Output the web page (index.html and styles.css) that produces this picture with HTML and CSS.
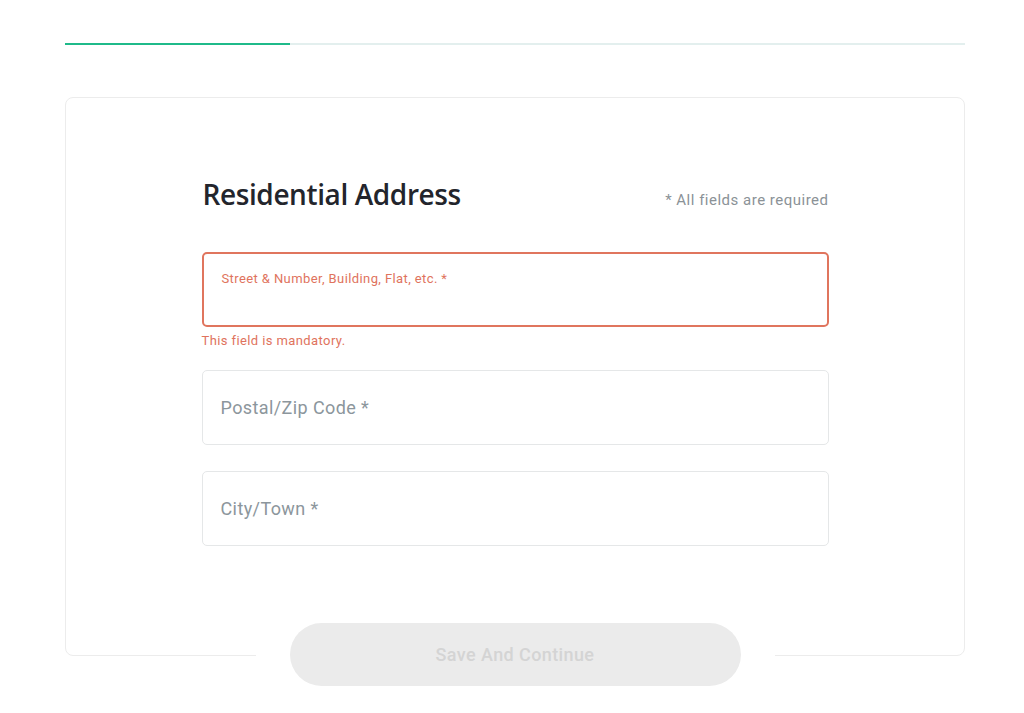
FILE: index.html
```html
<!DOCTYPE html>
<html>
<head>
<meta charset="utf-8">
<link rel="stylesheet" href="styles.css">
</head>
<body>
<div class="page">
  <div class="progress"><div class="progress-fill"></div></div>
  <div class="card">
    <div class="form">
      <div class="head">
        <h1 class="title">Residential Address</h1>
        <span class="note">* All fields are required</span>
      </div>
      <div class="field field-error">
        <span class="float-label">Street &amp; Number, Building, Flat, etc. *</span>
      </div>
      <div class="error-text">This field is mandatory.</div>
      <div class="field field-plain"><span class="placeholder">Postal/Zip Code *</span></div>
      <div class="field field-plain field-last"><span class="placeholder">City/Town *</span></div>
    </div>
  </div>
  <div class="btn-wrap">
    <button class="btn">Save And Continue</button>
  </div>
</div>
</body>
</html>
```
FILE: styles.css
```css
html, body {
  margin: 0;
  padding: 0;
  background: #ffffff;
}
body {
  font-family: Roboto, "Liberation Sans", sans-serif;
}
.page {
  width: 900px;
  margin-left: 65px;
  padding-top: 43px;
  display: flex;
  flex-direction: column;
}
.progress {
  height: 2px;
  background: #e3efee;
  display: flex;
}
.progress-fill {
  width: 225px;
  background: #1fba8a;
}
.card {
  margin-top: 52px;
  height: 557px;
  border: 1px solid #ececec;
  border-radius: 8px;
  display: flex;
  justify-content: center;
}
.form {
  width: 627px;
  padding-top: 77px;
  display: flex;
  flex-direction: column;
}
.head {
  display: flex;
  justify-content: space-between;
  align-items: baseline;
  padding-left: 1px;
  height: 40px;
}
.title {
  margin: 0;
  font-family: "Open Sans", "Liberation Sans", sans-serif;
  font-weight: 600;
  font-size: 28px;
  letter-spacing: -0.4px;
  color: #23252c;
  line-height: 38px;
}
.note {
  font-size: 15px;
  letter-spacing: 0.5px;
  color: #8b9297;
  line-height: 20px;
}
.field {
  box-sizing: border-box;
  height: 75px;
  border-radius: 5px;
  display: flex;
  align-items: center;
  padding-left: 18px;
}
.field-error {
  margin-top: 37px;
  border: 2px solid #e0755e;
  align-items: flex-start;
  padding-top: 17px;
}
.float-label {
  font-size: 13px;
  letter-spacing: 0.4px;
  color: #e0735d;
  line-height: 16px;
}
.error-text {
  margin-top: 6px;
  font-size: 13px;
  letter-spacing: 0.4px;
  color: #e0735d;
  line-height: 16px;
}
.field-plain {
  border: 1px solid #e5e7e8;
  margin-top: 21px;
}
.field-plain + .field-plain {
  margin-top: 26px;
}
.placeholder {
  font-size: 18px;
  letter-spacing: 0.4px;
  color: #8c969c;
}
.btn-wrap {
  align-self: center;
  margin-top: -33px;
  background: #ffffff;
  padding: 0 34px;
  display: flex;
}
.btn {
  width: 451px;
  height: 63px;
  border: none;
  border-radius: 32px;
  background: #ebebeb;
  color: #d4d4d4;
  font-family: Roboto, "Liberation Sans", sans-serif;
  font-size: 18px;
  letter-spacing: 0.4px;
  font-weight: 500;
}
```
